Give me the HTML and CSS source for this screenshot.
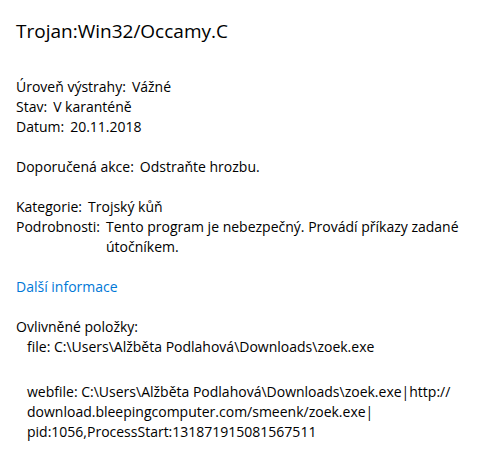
FILE: index.html
```html
<!DOCTYPE html>
<html lang="cs">
  <head>
    <meta charset="UTF-8" />
    <meta name="viewport" content="width=device-width, initial-scale=1.0" />
    <title>Trojan:Win32/Occamy.C</title>
    <link rel="stylesheet" href="styles.css">
  </head>
  <body>
    <div class="panel">
      <h1 class="threat-name">Trojan:Win32/Occamy.C</h1>

      <div class="section">
        <div class="row"><span class="label">Úroveň výstrahy:</span><span class="value">Vážné</span></div>
        <div class="row"><span class="label">Stav:</span><span class="value">V karanténě</span></div>
        <div class="row"><span class="label">Datum:</span><span class="value">20.11.2018</span></div>
      </div>

      <div class="section">
        <div class="row"><span class="label">Doporučená akce:</span><span class="value">Odstraňte hrozbu.</span></div>
      </div>

      <div class="section">
        <div class="row"><span class="label">Kategorie:</span><span class="value">Trojský kůň</span></div>
        <div class="row"><span class="label">Podrobnosti:</span><span class="value">Tento program je nebezpečný. Provádí příkazy zadané útočníkem.</span></div>
      </div>

      <div class="section">
        <a class="more-link" href="#">Další informace</a>
      </div>

      <div class="section">
        <div class="items-title">Ovlivněné položky:</div>
        <div class="item">file: C:\Users\Alžběta Podlahová\Downloads\zoek.exe</div>
        <div class="item item-web">webfile: C:\Users\Alžběta Podlahová\Downloads\zoek.exe|http://<br>download.bleepingcomputer.com/smeenk/zoek.exe|<br>pid:1056,ProcessStart:131871915081567511</div>
      </div>
    </div>
  </body>
</html>
```

FILE: styles.css
```css
body {
  margin: 0;
  padding: 0;
  background-color: #fff;
  color: #000;
  font-family: "Open Sans", "Noto Sans", sans-serif;
  font-size: 14px;
  line-height: 20px;
}
.panel {
  padding: 19px 16px 0 16px;
}
.threat-name {
  margin: 0 0 34px 0;
  font-size: 19px;
  font-weight: normal;
  line-height: 24px;
}
.section {
  margin-bottom: 20px;
}
.row {
  display: flex;
}
.label {
  flex: none;
}
.value {
  margin-left: 6px;
}
.more-link {
  color: #0078d7;
  text-decoration: none;
}
.item {
  padding-left: 11px;
}
.item-web {
  margin-top: 25px;
}
```
